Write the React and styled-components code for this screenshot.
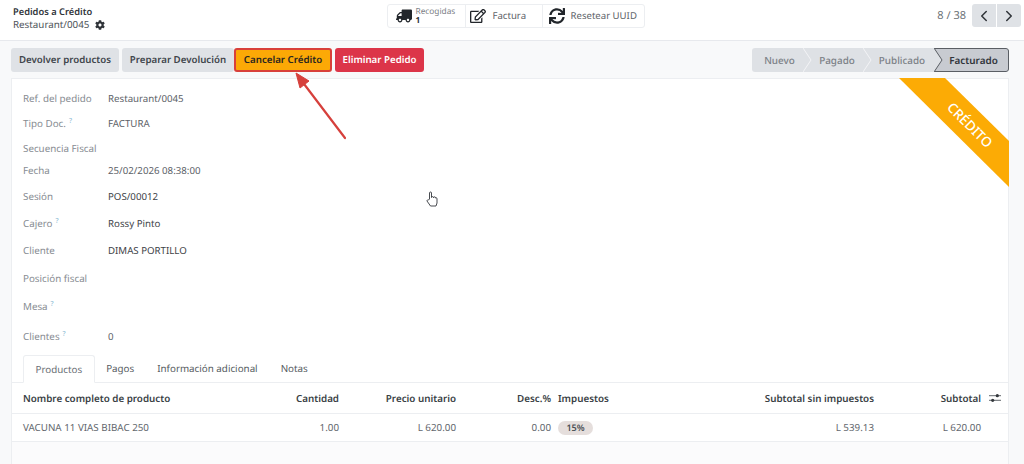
import React from 'react';
import styled, { createGlobalStyle } from 'styled-components';
import { FaTruck, FaRegEdit, FaSync, FaCog } from 'react-icons/fa';
import { FiChevronLeft, FiChevronRight } from 'react-icons/fi';

const GlobalStyle = createGlobalStyle`
  html, body {
    margin: 0;
    padding: 0;
    background: #f8f9fa;
    font-family: "Noto Sans", "Open Sans", sans-serif;
    font-size: 9.8px;
    color: #4a4f55;
    overflow: hidden;
    text-rendering: geometricPrecision;
  }
  * { box-sizing: border-box; white-space: nowrap; }
`;

const Page = styled.div`
  position: relative;
  width: 1024px;
  height: 464px;
  overflow: hidden;
`;

const ControlPanel = styled.header`
  display: grid;
  grid-template-columns: 1fr auto 1fr;
  align-items: center;
  height: 41px;
  padding: 0 3px 0 13px;
  background: #fff;
  border-bottom: 1px solid #e7e9ed;
`;

const Breadcrumb = styled.div`
  display: flex;
  flex-direction: column;
  gap: 0;
  line-height: 13px;
  padding-bottom: 4px;
`;

const BreadcrumbParent = styled.span`
  font-size: 9.3px;
  font-weight: 600;
  color: #30343a;
`;

const BreadcrumbCurrent = styled.span`
  display: flex;
  align-items: center;
  gap: 6px;
  font-size: 9.8px;
  color: #4f545a;
  svg { font-size: 10px; color: #2f3338; }
`;

const StatButtons = styled.div`
  display: flex;
  height: 24px;
  margin: 0 3px 9px 0;
  border: 1px solid #eceef1;
  border-radius: 3px;
`;

const StatButton = styled.div`
  display: flex;
  align-items: center;
  gap: ${(props) => props.$gap || 8}px;
  width: ${(props) => props.$width}px;
  padding-left: ${(props) => props.$pad || 8}px;
  font-size: 9.6px;
  color: #5d6268;
  & + & { border-left: 1px solid #eceef1; }
  svg { font-size: 16px; color: #22262b; flex: none; }
`;

const TruckIcon = styled(FaTruck)`
  transform: scaleX(-1);
`;

const StatText = styled.span`
  display: flex;
  flex-direction: column;
  font-size: 8.3px;
  line-height: 9px;
  color: #7b8086;
  b { color: #30343a; font-weight: 700; }
`;

const Pager = styled.div`
  display: flex;
  align-items: center;
  justify-content: flex-end;
  gap: 6px;
  margin-bottom: 9px;
  font-size: 11px;
  color: #6a6f75;
`;

const PagerButtons = styled.div`
  display: flex;
  gap: 1px;
`;

const PagerButton = styled.div`
  display: flex;
  align-items: center;
  justify-content: center;
  width: 24px;
  height: 23px;
  background: #dfe2e6;
  border-radius: ${(props) => (props.$right ? '0 3px 3px 0' : '3px 0 0 3px')};
  color: #2f3338;
  font-size: 18px;
`;

const ActionBar = styled.div`
  display: flex;
  justify-content: space-between;
  align-items: center;
  height: 37px;
  padding: 0 15px 0 11px;
`;

const Actions = styled.div`
  display: flex;
  gap: 3px;
`;

const ActionButton = styled.div`
  display: flex;
  align-items: center;
  justify-content: center;
  width: ${(props) => props.$width}px;
  height: 24px;
  margin-left: ${(props) => (props.$outline ? '-3px' : '0')};
  border-radius: 3px;
  font-size: 9.7px;
  font-weight: 600;
  background: ${(props) => props.$bg || '#dfe2e6'};
  color: ${(props) => props.$color || '#41464c'};
  border: ${(props) => (props.$outline ? '2px solid #d8403a' : 'none')};
`;

const StatusBar = styled.div`
  display: flex;
  height: 24px;
  border-radius: 3px;
  overflow: hidden;
`;

const Step = styled.div`
  position: relative;
  display: flex;
  align-items: center;
  justify-content: center;
  width: ${(props) => props.$width}px;
  padding-left: ${(props) => props.$pl || 0}px;
  font-size: 9.9px;
  background: ${(props) => (props.$active ? '#c8cbd1' : '#dee1e5')};
  color: ${(props) => (props.$active ? '#30343a' : '#7b8086')};
  font-weight: ${(props) => (props.$active ? 600 : 500)};
  border: ${(props) => (props.$active ? '1px solid #5a5e64' : 'none')};
  border-left: none;
  border-radius: ${(props) => (props.$active ? '0 3px 3px 0' : '0')};
`;

const StepArrow = styled.svg`
  position: absolute;
  top: ${(props) => (props.$active ? -1 : 0)}px;
  left: ${(props) => (props.$active ? '0' : 'auto')};
  right: ${(props) => (props.$active ? 'auto' : '-8px')};
  z-index: 1;
  width: 9px;
  height: 24px;
`;

const Sheet = styled.main`
  position: relative;
  margin: 0 15px 0 11px;
  height: 386px;
  background: #fff;
  border: 1px solid #eceef1;
  border-bottom: none;
`;

const Fields = styled.div`
  padding: 13px 11px 0;
  height: 276px;
`;

const Field = styled.div`
  display: grid;
  grid-template-columns: 85px 1fr;
  align-items: start;
  line-height: 14px;
  height: ${(props) => props.$h}px;
`;

const FieldLabel = styled.span`
  font-size: 9.8px;
  color: #878c92;
  sup {
    font-size: 7px;
    color: #7fb4d0;
    margin-left: 3px;
    line-height: 0;
  }
`;

const FieldValue = styled.span`
  font-size: 9.7px;
  color: ${(props) => (props.$dark ? '#3e4348' : '#5d6268')};
`;

const Ribbon = styled.div`
  position: absolute;
  top: -1px;
  right: -1px;
  width: 110px;
  height: 109px;
  background: #fcab05;
  clip-path: polygon(0 0, 46px 0, 110px 63px, 110px 109px);
`;

const RibbonText = styled.span`
  position: absolute;
  top: 40px;
  left: 36px;
  width: 70px;
  text-align: center;
  transform: rotate(45deg);
  color: #fff;
  font-size: 13.5px;
  font-weight: 500;
  line-height: 14px;
`;

const Tabs = styled.nav`
  display: flex;
  height: 28px;
  padding-left: 11px;
  border-bottom: 1px solid #eceef1;
`;

const Tab = styled.div`
  display: flex;
  align-items: center;
  height: ${(props) => (props.$active ? 28 : 27)}px;
  padding: 0 11.5px;
  font-size: 9.8px;
  color: ${(props) => (props.$active ? '#6a6f75' : '#565b61')};
  background: #fff;
  border: ${(props) => (props.$active ? '1px solid #eceef1' : 'none')};
  border-bottom: ${(props) => (props.$active ? '1px solid #fff' : 'none')};
  border-radius: 3px 3px 0 0;
`;

const TableRow = styled.div`
  display: grid;
  grid-template-columns: 233px 83px 117px 95px 1fr 134px;
  position: relative;
  align-items: center;
  height: ${(props) => props.$h}px;
  padding-left: 11px;
  border-bottom: 1px solid #eceef1;
`;

const Cell = styled.div`
  display: flex;
  align-items: center;
  justify-content: ${(props) => (props.$right ? 'flex-end' : 'flex-start')};
  padding-left: ${(props) => props.$pl || 0}px;
  padding-right: ${(props) => props.$pr || 0}px;
  font-size: 9.8px;
  font-weight: ${(props) => (props.$head ? 600 : 400)};
  color: ${(props) => (props.$head ? '#3a3f45' : '#63686e')};
`;

const SplitCell = styled.div`
  display: flex;
  align-items: center;
  justify-content: space-between;
  padding-left: 7px;
`;

const Badge = styled.span`
  width: 35px;
  height: 14px;
  line-height: 14px;
  text-align: center;
  border-radius: 7px;
  background: #e5dedc;
  font-size: 9px;
  font-weight: 600;
  color: #4a4f55;
`;

const Filler = styled.div`
  height: 24px;
  background: #fbfbfc;
`;

const AdjustIcon = styled.svg`
  position: absolute;
  right: 7px;
  top: 9px;
  width: 12px;
  height: 12px;
`;

const Arrow = styled.svg`
  position: absolute;
  left: 290px;
  top: 68px;
  width: 60px;
  height: 76px;
`;

const Hand = styled.svg`
  position: absolute;
  left: 426px;
  top: 191px;
  width: 12px;
  height: 16px;
`;

const fields = [
  { label: 'Ref. del pedido', value: 'Restaurant/0045', h: 25 },
  { label: 'Tipo Doc.', help: true, value: 'FACTURA', h: 25 },
  { label: 'Secuencia Fiscal', h: 22 },
  { label: 'Fecha', value: '25/02/2026 08:38:00', h: 26 },
  { label: 'Sesión', value: 'POS/00012', dark: true, h: 27 },
  { label: 'Cajero', help: true, value: 'Rossy Pinto', dark: true, h: 27 },
  { label: 'Cliente', value: 'DIMAS PORTILLO', dark: true, h: 28 },
  { label: 'Posición fiscal', h: 28 },
  { label: 'Mesa', help: true, h: 30 },
  { label: 'Clientes', help: true, value: '0', h: 16 }
];

const stepArrow = (color, fill) => (
  <path d="M0 0 L8 12 L0 24" fill={fill} stroke={color} strokeWidth="1" />
);

export default function App() {
  return (
    <Page>
      <GlobalStyle />
      <ControlPanel>
        <Breadcrumb>
          <BreadcrumbParent>Pedidos a Crédito</BreadcrumbParent>
          <BreadcrumbCurrent>
            Restaurant/0045 <FaCog />
          </BreadcrumbCurrent>
        </Breadcrumb>
        <StatButtons>
          <StatButton $width={77} $gap={4}>
            <TruckIcon />
            <StatText>
              Recogidas
              <b>1</b>
            </StatText>
          </StatButton>
          <StatButton $width={77} $gap={7} $pad={4}>
            <FaRegEdit />
            Factura
          </StatButton>
          <StatButton $width={102} $gap={6} $pad={6}>
            <FaSync />
            Resetear UUID
          </StatButton>
        </StatButtons>
        <Pager>
          8 / 38
          <PagerButtons>
            <PagerButton>
              <FiChevronLeft />
            </PagerButton>
            <PagerButton $right>
              <FiChevronRight />
            </PagerButton>
          </PagerButtons>
        </Pager>
      </ControlPanel>

      <ActionBar>
        <Actions>
          <ActionButton $width={108}>Devolver productos</ActionButton>
          <ActionButton $width={112}>Preparar Devolución</ActionButton>
          <ActionButton $width={98} $bg="#fca906" $color="#2a2620" $outline>
            Cancelar Crédito
          </ActionButton>
          <ActionButton $width={89} $bg="#dc3549" $color="#fff">
            Eliminar Pedido
          </ActionButton>
        </Actions>
        <StatusBar>
          <Step $width={52} $pl={3}>
            Nuevo
            <StepArrow viewBox="0 0 9 24">{stepArrow('#f3f4f6', '#dee1e5')}</StepArrow>
          </Step>
          <Step $width={60} $pl={6}>
            Pagado
            <StepArrow viewBox="0 0 9 24">{stepArrow('#f3f4f6', '#dee1e5')}</StepArrow>
          </Step>
          <Step $width={70} $pl={6}>Publicado</Step>
          <Step $width={75} $pl={5} $active>
            <StepArrow $active viewBox="0 0 9 24">{stepArrow('#5a5e64', '#dee1e5')}</StepArrow>
            Facturado
          </Step>
        </StatusBar>
      </ActionBar>

      <Sheet>
        <Ribbon>
          <RibbonText>CRÉDITO</RibbonText>
        </Ribbon>
        <Fields>
          {fields.map((f) => (
            <Field key={f.label} $h={f.h}>
              <FieldLabel>
                {f.label}
                {f.help && <sup>?</sup>}
              </FieldLabel>
              <FieldValue $dark={f.dark}>{f.value}</FieldValue>
            </Field>
          ))}
        </Fields>
        <Tabs>
          <Tab $active>Productos</Tab>
          <Tab>Pagos</Tab>
          <Tab>Información adicional</Tab>
          <Tab>Notas</Tab>
        </Tabs>
        <TableRow $h={31}>
          <Cell $head>Nombre completo de producto</Cell>
          <Cell $head $right>Cantidad</Cell>
          <Cell $head $right>Precio unitario</Cell>
          <Cell $head $right>Desc.%</Cell>
          <SplitCell>
            <Cell $head>Impuestos</Cell>
            <Cell $head>Subtotal sin impuestos</Cell>
          </SplitCell>
          <Cell $head $right $pr={27}>Subtotal</Cell>
          <AdjustIcon viewBox="0 0 13 12">
            <path d="M0 3.5h13M0 8.5h13" stroke="#555a60" strokeWidth="1" />
            <circle cx="9" cy="3.5" r="1.7" fill="#33373c" />
            <circle cx="4" cy="8.5" r="1.7" fill="#33373c" />
          </AdjustIcon>
        </TableRow>
        <TableRow $h={28}>
          <Cell>VACUNA 11 VIAS BIBAC 250</Cell>
          <Cell $right>1.00</Cell>
          <Cell $right>L 620.00</Cell>
          <Cell $right>0.00</Cell>
          <SplitCell>
            <Badge>15%</Badge>
            <Cell>L 539.13</Cell>
          </SplitCell>
          <Cell $right $pr={27}>L 620.00</Cell>
        </TableRow>
        <Filler />
      </Sheet>

      <Arrow viewBox="0 0 60 76">
        <path d="M55 70 L11 12" stroke="#d6403c" strokeWidth="2.2" strokeLinecap="round" />
        <path d="M6 5 L19 13 L10 20 Z" fill="#d6403c" stroke="#d6403c" strokeLinejoin="round" />
      </Arrow>
      <Hand viewBox="0 0 12 16">
        <path
          d="M3.5 8 V2 a1 1 0 0 1 2 0 V6.5 a1 1 0 0 1 2 0.2 a1 1 0 0 1 2 0.3 a1 1 0 0 1 1.5 0.8 V12 L10 15 H4.5 L1 10 a1 1 0 0 1 1.5 -1 Z"
          fill="#fff"
          stroke="#33373c"
          strokeWidth="0.9"
        />
      </Hand>
    </Page>
  );
}
